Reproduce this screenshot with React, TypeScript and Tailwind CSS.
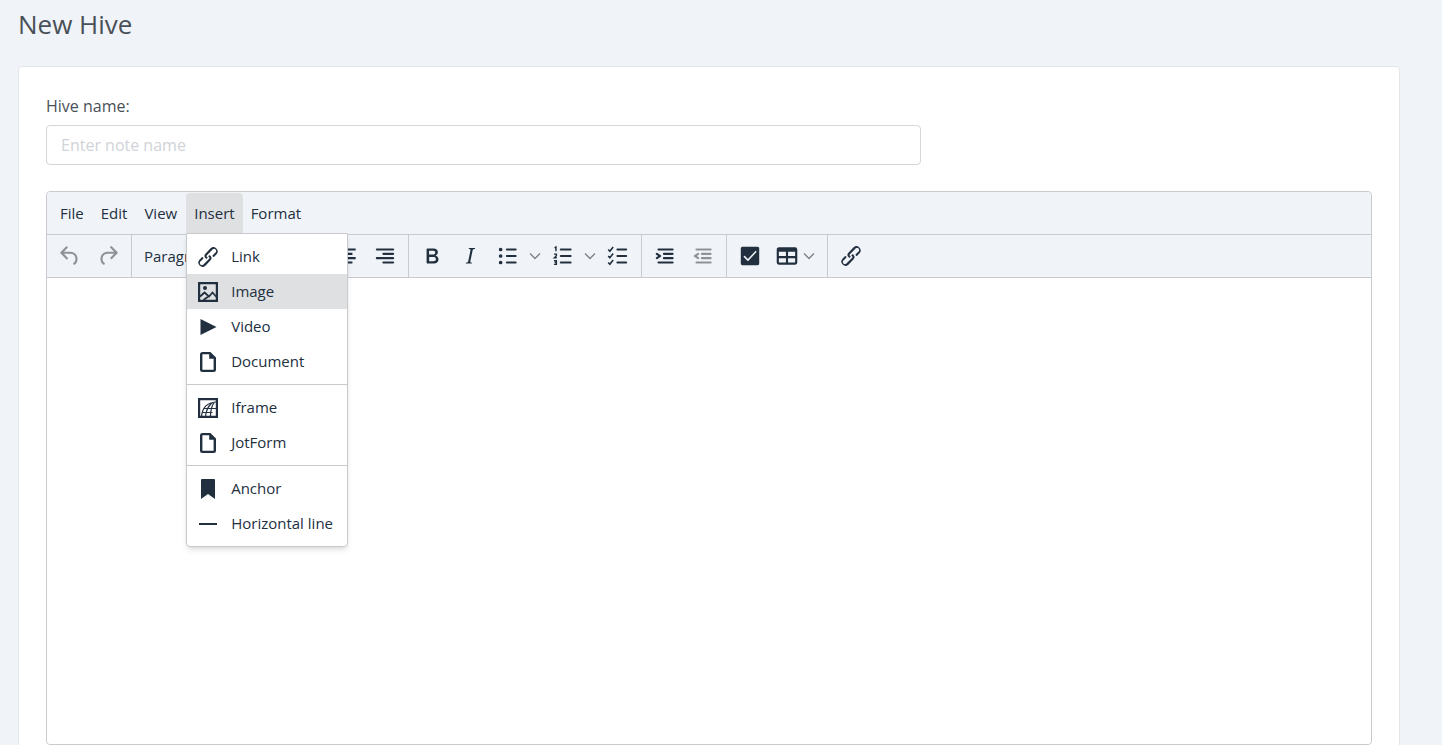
import React from 'react';

function Icon({ children, viewBox = '0 0 24 24' }: { children: React.ReactNode; viewBox?: string }) {
  return (
    <svg width="26" height="26" viewBox={viewBox} fill="currentColor" fillRule="evenodd" aria-hidden="true" className="shrink-0">
      {children}
    </svg>
  );
}

const LinkIcon = () => (
  <Icon>
    <path d="M6.2 12.3a1 1 0 0 1 1.4 1.4l-2 2a2 2 0 1 0 2.6 2.8l4.8-4.8a1 1 0 0 0 0-1.4 1 1 0 1 1 1.4-1.3 2.9 2.9 0 0 1 0 4L9.6 20a3.9 3.9 0 0 1-5.5-5.5l2-2Zm11.6-.6a1 1 0 0 1-1.4-1.4l2-2a2 2 0 1 0-2.6-2.8L11 10.3a1 1 0 0 0 0 1.4A1 1 0 1 1 9.6 13a2.9 2.9 0 0 1 0-4L14.4 4a3.9 3.9 0 0 1 5.5 5.5l-2 2Z" />
  </Icon>
);

const UndoIcon = () => (
  <Icon>
    <path d="M6.4 8H12c3.7 0 6.2 2 6.8 5.1.6 2.7-.4 5.6-2.3 6.8a1 1 0 0 1-1-1.8c1.1-.6 1.8-2.7 1.4-4.6-.5-2.1-2.1-3.5-4.9-3.5H6.4l3.3 3.3a1 1 0 1 1-1.4 1.4l-5-5a1 1 0 0 1 0-1.4l5-5a1 1 0 0 1 1.4 1.4L6.4 8Z" />
  </Icon>
);

const RedoIcon = () => (
  <Icon>
    <path d="M17.6 10H12c-2.8 0-4.4 1.4-4.9 3.5-.4 2 .3 4 1.4 4.6a1 1 0 1 1-1 1.8c-2-1.2-2.9-4.1-2.3-6.8.6-3 3-5.1 6.8-5.1h5.6l-3.3-3.3a1 1 0 1 1 1.4-1.4l5 5a1 1 0 0 1 0 1.4l-5 5a1 1 0 0 1-1.4-1.4l3.3-3.3Z" />
  </Icon>
);

const BoldIcon = () => (
  <Icon>
    <path d="M7.8 19c-.3 0-.5 0-.6-.2l-.2-.5V5.7c0-.2 0-.4.2-.5l.6-.2h5c1.5 0 2.7.3 3.5 1 .7.6 1.1 1.4 1.1 2.5a3 3 0 0 1-.6 1.9c-.4.6-1 1-1.6 1.2.4.1.9.3 1.3.6s.8.7 1 1.2c.4.4.5 1 .5 1.6 0 1.3-.4 2.3-1.3 3-.8.7-2.1 1-3.8 1H7.8Zm5-8.3c.6 0 1.2-.1 1.6-.5.4-.3.6-.7.6-1.3 0-1.1-.8-1.7-2.3-1.7H9.3v3.5h3.4Zm.5 6c.7 0 1.3-.1 1.7-.4.4-.4.6-.9.6-1.5s-.2-1-.7-1.4c-.4-.3-1-.4-2-.4H9.4v3.8h4Z" />
  </Icon>
);

const ItalicIcon = () => (
  <Icon>
    <path d="m16.7 4.7-.1.9h-.3c-.6 0-1 0-1.4.3-.3.3-.4.6-.5 1.1l-2.1 9.8v.6c0 .5.4.8 1.4.8h.2l-.2.8H8l.2-.8h.2c1.1 0 1.8-.5 2-1.5l2-9.8.1-.5c0-.6-.4-.8-1.4-.8h-.3l.2-.9h5.8Z" />
  </Icon>
);

const AlignLeftIcon = () => (
  <Icon>
    <path d="M4 5h16v2H4zM4 9h10v2H4zM4 13h16v2H4zM4 17h10v2H4z" />
  </Icon>
);

const AlignCenterIcon = () => (
  <Icon>
    <path d="M4 5h16v2H4zM7 9h10v2H7zM4 13h16v2H4zM7 17h10v2H7z" />
  </Icon>
);

const AlignRightIcon = () => (
  <Icon>
    <path d="M4.500 5h15a1 1 0 0 1 0 2h-15a1 1 0 1 1 0-2Zm6 4h9a1 1 0 0 1 0 2h-9a1 1 0 0 1 0-2Zm0 8h9a1 1 0 0 1 0 2h-9a1 1 0 0 1 0-2Zm-6-4h15a1 1 0 0 1 0 2h-15a1 1 0 0 1 0-2Z" />
  </Icon>
);

const BulletListIcon = () => (
  <Icon>
    <path d="M11 5h8a1 1 0 0 1 0 2h-8a1 1 0 0 1 0-2Zm0 6h8a1 1 0 0 1 0 2h-8a1 1 0 0 1 0-2Zm0 6h8a1 1 0 0 1 0 2h-8a1 1 0 0 1 0-2ZM3.500 6a1.700 1.700 0 1 0 3.400 0 1.700 1.700 0 1 0-3.400 0Zm0 6a1.700 1.700 0 1 0 3.400 0 1.700 1.700 0 1 0-3.400 0Zm0 6a1.700 1.700 0 1 0 3.400 0 1.700 1.700 0 1 0-3.400 0Z" />
  </Icon>
);

const NumberListIcon = () => (
  <Icon>
    <path d="M10 17h9a1 1 0 0 1 0 2h-9a1 1 0 0 1 0-2Zm0-6h9a1 1 0 0 1 0 2h-9a1 1 0 0 1 0-2Zm0-6h9a1 1 0 1 1 0 2h-9a1 1 0 1 1 0-2Z" />
    <path d="M4.200 4.500 5.500 3.700V7.600M3.700 10.300h2.200v1.400L4 13.600h2.300M3.700 16.400h2.200v1.600H4.300 5.900v1.700H3.700" fill="none" stroke="currentColor" strokeWidth="1.300" />
  </Icon>
);

const CheckListIcon = () => (
  <Icon>
    <path d="M11.500 17h8a1 1 0 0 1 0 2h-8a1 1 0 0 1 0-2Zm0-6h8a1 1 0 0 1 0 2h-8a1 1 0 0 1 0-2Zm0-6h8a1 1 0 0 1 0 2h-8a1 1 0 0 1 0-2Z" />
    <path d="m3 6 1.500 1.600 3-3.800M3 12l1.500 1.600 3-3.800M3 18l1.500 1.600 3-3.800" fill="none" stroke="currentColor" strokeWidth="1.500" />
  </Icon>
);

const IndentIcon = () => (
  <Icon>
    <path d="M6 5h13a1 1 0 0 1 0 2H6a1 1 0 1 1 0-2Zm5 4h8a1 1 0 0 1 0 2h-8a1 1 0 0 1 0-2Zm0 4h8a1 1 0 0 1 0 2h-8a1 1 0 0 1 0-2Zm-5 4h13a1 1 0 0 1 0 2H6a1 1 0 0 1 0-2Zm-2.100-3.800L5.700 12l-1.800-1.200a1 1 0 0 1 1.200-1.600l3 2a1 1 0 0 1 0 1.600l-3 2a1 1 0 1 1-1.200-1.600Z" />
  </Icon>
);

const OutdentIcon = () => (
  <Icon>
    <path d="M6 5h13a1 1 0 0 1 0 2H6a1 1 0 1 1 0-2Zm5 4h8a1 1 0 0 1 0 2h-8a1 1 0 0 1 0-2Zm0 4h8a1 1 0 0 1 0 2h-8a1 1 0 0 1 0-2Zm-5 4h13a1 1 0 0 1 0 2H6a1 1 0 0 1 0-2Zm2.100-3.800a1 1 0 0 1-1.200 1.600l-3-2a1 1 0 0 1 0-1.600l3-2a1 1 0 0 1 1.200 1.600L6.300 12l1.800 1.200Z" />
  </Icon>
);

const CheckboxIcon = () => (
  <Icon>
    <path d="M5 3.500h14a1.500 1.500 0 0 1 1.500 1.500v14a1.500 1.500 0 0 1-1.500 1.500H5A1.500 1.500 0 0 1 3.500 19V5A1.500 1.500 0 0 1 5 3.500Zm12.800 5a.7.7 0 0 0-1-1l-6.700 7.300-2.700-2.700a.7.7 0 0 0-1 1l3.200 3.200c.3.300.7.300 1 0l7.200-7.800Z" />
  </Icon>
);

const TableIcon = () => (
  <Icon>
    <path d="M19.500 4a2 2 0 0 1 2 2v12a2 2 0 0 1-2 2h-15a2 2 0 0 1-2-2V6c0-1.100.9-2 2-2h15ZM4.500 14v4H11v-4H4.500Zm15 0H13v4h6.500v-4Zm0-6H13v4h6.500V8Zm-15 4H11V8H4.500v4Z" />
  </Icon>
);

const ImageIcon = () => (
  <Icon viewBox="-1 -1 26 26">
    <path d="M2 2h20v20H2V2Zm2.200 2.200v15.600h15.600V4.200H4.200Z" />
    <path d="m4 16.500 4.500-4 4.500 4 3.500-4 4 4.500M7.500 20l5.500-4" fill="none" stroke="currentColor" strokeWidth="1.800" />
    <circle cx="9" cy="8" r="2" />
  </Icon>
);

const VideoIcon = () => (
  <Icon viewBox="-1 -1 26 26">
    <path d="M4.500 4v16l16-8-16-8Z" />
  </Icon>
);

const DocumentIcon = () => (
  <Icon viewBox="-1 -1 26 26">
    <path d="M14.400 2H6.500A2.500 2.500 0 0 0 4 4.500v15A2.500 2.500 0 0 0 6.500 22h11a2.500 2.500 0 0 0 2.500-2.500V7.400L14.400 2ZM17.600 19.700H6.400V4.300h6.800v4.500h4.400v10.900Z" />
  </Icon>
);

const IframeIcon = () => (
  <Icon viewBox="-1 -1 26 26">
    <path d="M2 2h20v20H2V2Zm2.200 2.200v15.600h15.600V4.200H4.200Z" />
    <path d="M5.500 20C6.500 12 11 6.500 20 6M9.500 20c.8-6 3-10.500 7-13.500M14.500 20c0-6 1-10 4-14M8 12.500h12M6 16.500h10.500" fill="none" stroke="currentColor" strokeWidth="1.200" />
  </Icon>
);

const AnchorIcon = () => (
  <Icon viewBox="-1 -1 26 26">
    <path d="M6 2h12a1 1 0 0 1 1 1v19l-7-5-7 5V3a1 1 0 0 1 1-1Z" />
  </Icon>
);

const LineIcon = () => (
  <Icon viewBox="-1 -1 26 26">
    <path d="M3 11h18v2H3z" />
  </Icon>
);

const Chevron = () => (
  <svg width="12" height="12" viewBox="0 0 12 12" fill="none" stroke="#7d838b" strokeWidth="1.400" aria-hidden="true">
    <path d="m1 3.500 5 5 5-5" />
  </svg>
);

function ToolButton({ label, disabled, children }: { label: string; disabled?: boolean; children: React.ReactNode }) {
  return (
    <button type="button" aria-label={label} disabled={disabled} className="flex h-9 w-9 items-center justify-center disabled:text-[#8f9398]">
      {children}
    </button>
  );
}

function SplitButton({ label, children }: { label: string; children: React.ReactNode }) {
  return (
    <div className="flex h-9 items-center">
      <ToolButton label={label}>{children}</ToolButton>
      <button type="button" aria-label={`${label} options`} className="flex h-9 w-[17px] items-center justify-center"><Chevron /></button>
    </div>
  );
}

function ToolGroup({ children }: { children: React.ReactNode }) {
  return (
    <div className="flex items-center gap-[2px] border-r border-[#c8cacd] px-[5px] last:border-r-0">
      {children}
    </div>
  );
}

const groups = [
  [
    { label: 'Link', icon: <LinkIcon /> },
    { label: 'Image', icon: <ImageIcon />, active: true },
    { label: 'Video', icon: <VideoIcon /> },
    { label: 'Document', icon: <DocumentIcon /> },
  ],
  [
    { label: 'Iframe', icon: <IframeIcon /> },
    { label: 'JotForm', icon: <DocumentIcon /> },
  ],
  [
    { label: 'Anchor', icon: <AnchorIcon /> },
    { label: 'Horizontal line', icon: <LineIcon /> },
  ],
];

function InsertMenu() {
  return (
    <div role="menu" className="absolute left-0 top-full z-10 w-[162px] rounded-b border border-[#c8cacd] bg-white shadow-md">
      {groups.map((group, i) => (
        <div key={i} className="border-b border-[#c8cacd] py-[5px] last:border-b-0">
          {group.map((item) => (
            <button
              key={item.label}
              type="button"
              role="menuitem"
              className={`flex h-[35px] w-full items-center gap-[10px] px-2 text-left ${item.active ? 'bg-[#dee0e2]' : ''}`}
            >
              {item.icon}
              <span className="whitespace-nowrap">{item.label}</span>
            </button>
          ))}
        </div>
      ))}
    </div>
  );
}

export default function App() {
  return (
    <div className='min-h-screen bg-[#f0f4f9] pl-[18px] pr-[42px] font-["Open_Sans",sans-serif] text-[#222f3e]'>
      <h1 className="pt-1 text-[26px] leading-10 text-[#495057]">New Hive</h1>

      <main className="mt-[22px] rounded border border-[#e2e5e9] bg-white px-[27px] pb-6 pt-[27px]">
        <label htmlFor="hive-name" className="block text-base leading-6 text-[#495057]">Hive name:</label>
        <input
          id="hive-name"
          type="text"
          placeholder="Enter note name"
          className="mt-[7px] block h-10 w-[66%] rounded border border-[#d3d6da] px-[14px] text-base text-[#495057] placeholder:text-[#d0d3d7]"
        />

        <section className="mt-[26px] rounded border border-[#c8cacd] text-[15px]">
          <nav className="flex h-[42px] items-center rounded-t bg-[#f0f4f9] pl-1">
            <button type="button" className="h-10 px-[9px]">File</button>
            <button type="button" className="h-10 px-2">Edit</button>
            <button type="button" className="h-10 px-[9px]">View</button>
            <div className="relative">
              <button type="button" aria-expanded="true" className="h-10 rounded-t bg-[#dee0e2] px-2">Insert</button>
              <InsertMenu />
            </div>
            <button type="button" className="h-10 px-2">Format</button>
          </nav>

          <div className="flex h-11 border-y border-[#c8cacd] bg-[#f0f4f9]">
            <ToolGroup>
              <ToolButton label="Undo" disabled><UndoIcon /></ToolButton>
              <ToolButton label="Redo" disabled><RedoIcon /></ToolButton>
            </ToolGroup>
            <button type="button" className="flex w-[154px] items-center justify-between border-r border-[#c8cacd] px-3">
              Paragraph
              <Chevron />
            </button>
            <ToolGroup>
              <ToolButton label="Align left"><AlignLeftIcon /></ToolButton>
              <ToolButton label="Align center"><AlignCenterIcon /></ToolButton>
              <ToolButton label="Align right"><AlignRightIcon /></ToolButton>
            </ToolGroup>
            <ToolGroup>
              <ToolButton label="Bold"><BoldIcon /></ToolButton>
              <ToolButton label="Italic"><ItalicIcon /></ToolButton>
              <SplitButton label="Bullet list"><BulletListIcon /></SplitButton>
              <SplitButton label="Numbered list"><NumberListIcon /></SplitButton>
              <ToolButton label="Checklist"><CheckListIcon /></ToolButton>
            </ToolGroup>
            <ToolGroup>
              <ToolButton label="Increase indent"><IndentIcon /></ToolButton>
              <ToolButton label="Decrease indent" disabled><OutdentIcon /></ToolButton>
            </ToolGroup>
            <ToolGroup>
              <ToolButton label="Checkbox"><CheckboxIcon /></ToolButton>
              <button type="button" aria-label="Table" className="flex h-9 items-center gap-[3px] pl-1 pr-[7px]">
                <TableIcon />
                <Chevron />
              </button>
            </ToolGroup>
            <ToolGroup>
              <ToolButton label="Link"><LinkIcon /></ToolButton>
            </ToolGroup>
          </div>

          <div role="textbox" aria-label="Hive content" contentEditable suppressContentEditableWarning className="min-h-[466px] rounded-b bg-white p-4 outline-none" />
        </section>
      </main>
    </div>
  );
}
